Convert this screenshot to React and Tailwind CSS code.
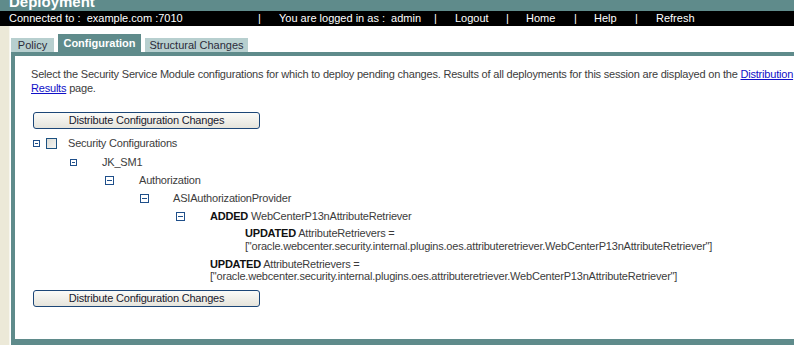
import React from 'react';

const TEAL = 'bg-[#5f8b8b]';

function Minus({ small }) {
  return (
    <span
      className={`inline-flex ${small ? 'w-[7px] h-[7px]' : 'w-[9px] h-[9px]'} border border-[#1f4f8a] items-center justify-center bg-white shrink-0`}
    >
      <span className={`block ${small ? 'w-[3px]' : 'w-[5px]'} h-[1px] bg-[#1f4f8a]`} />
    </span>
  );
}

function Button() {
  return (
    <button className="w-[227px] h-[17px] border border-[#1c4677] rounded-[3px] bg-gradient-to-b from-[#fbfbf8] to-[#e6e4dc] text-[11px] leading-[15px] text-[#1a1a2e] tracking-[-0.2px]">
      Distribute Configuration Changes
    </button>
  );
}

function TreeRow({ iconX, textX, height, small, children }) {
  const w = small ? 7 : 9;
  return (
    <div className="flex items-center" style={{ height }}>
      <div style={{ width: iconX }} className="shrink-0" />
      <Minus small={small} />
      <div style={{ width: textX - iconX - w }} className="shrink-0" />
      <div className="whitespace-nowrap">{children}</div>
    </div>
  );
}

export default function App() {
  const navCell = 'shrink-0 whitespace-pre';
  return (
    <div className="w-[794px] h-[345px] overflow-hidden bg-white text-[11px] text-[#3c3c3c] font-['Liberation_Sans',Arial,sans-serif]">
      {/* title strip */}
      <div className={`h-[11px] ${TEAL} overflow-hidden`}>
        <div className="pl-[9px] -mt-[6px] text-[15px] font-bold text-white leading-[16px]">Deployment</div>
      </div>

      {/* black nav bar */}
      <div className="h-[15px] bg-black text-white flex items-center leading-[15px]">
        <span className={`${navCell} w-[258px] pl-[9px]`}>Connected to :  example.com :7010</span>
        <span className={`${navCell} w-[21px]`}>|</span>
        <span className={`${navCell} w-[155px]`}>You are logged in as :  admin</span>
        <span className={`${navCell} w-[21px]`}>|</span>
        <span className={`${navCell} w-[51px]`}>Logout</span>
        <span className={`${navCell} w-[20px]`}>|</span>
        <span className={`${navCell} w-[48px]`}>Home</span>
        <span className={`${navCell} w-[20px]`}>|</span>
        <span className={`${navCell} w-[41px]`}>Help</span>
        <span className={`${navCell} w-[21px]`}>|</span>
        <span className={navCell}>Refresh</span>
      </div>

      <div className="flex h-[319px]">
        {/* left gutter */}
        <div className="w-[10px] shrink-0 bg-[#ece9d8] border-r border-[#f7f6ef]" />

        <div className="flex-1 flex flex-col pl-[1px] min-w-0">
          {/* tabs */}
          <div className="flex items-end h-[26px] pt-[8px] text-[#2b2b3a]">
            <div className="w-[43px] h-[14px] bg-[#b7cfcf] flex items-center justify-center leading-[14px]">Policy</div>
            <div className="w-[4px]" />
            <div className={`w-[83px] h-[18px] ${TEAL} text-white font-bold flex items-center justify-center leading-[18px]`}>Configuration</div>
            <div className="w-[4px]" />
            <div className="w-[103px] h-[14px] bg-[#b7cfcf] flex items-center justify-center leading-[14px]">Structural Changes</div>
          </div>

          {/* panel */}
          <div className="flex-1 border-l-4 border-t-4 border-b-[6px] border-[#5f8b8b] w-[800px] pl-[16px] pt-[11px] tracking-[-0.2px]">
            <p className="leading-[14px] w-[775px]">
              Select the Security Service Module configurations for which to deploy pending changes. Results of all deployments for this session are displayed on the{' '}
              <a className="text-[#1010c8] underline">Distribution</a>{' '}
              <a className="text-[#1010c8] underline">Results</a> page.
            </p>

            <div className="mt-[17px] ml-[2px]">
              <Button />
            </div>

            <div className="ml-[-16px] mt-[4px] pt-[1px]">
              <div className="flex items-center h-[19px]">
                <div className="w-[18px] shrink-0" />
                <Minus small />
                <div className="w-[6px] shrink-0" />
                <span className="w-[11px] h-[11px] border border-[#1c5180] bg-gradient-to-br from-[#dcdcd6] to-[#f5f5f2] shrink-0" />
                <div className="w-[11px] shrink-0" />
                <span>Security Configurations</span>
              </div>
              <TreeRow small iconX={55} textX={87} height={18}>JK_SM1</TreeRow>
              <TreeRow iconX={90} textX={124} height={18}>Authorization</TreeRow>
              <TreeRow iconX={125} textX={158} height={18}>ASIAuthorizationProvider</TreeRow>
              <TreeRow iconX={161} textX={195} height={18}>
                <b className="text-[#111]">ADDED</b> WebCenterP13nAttributeRetriever
              </TreeRow>
              <div className="pl-[230px] pt-[2px] leading-[13px] whitespace-nowrap">
                <div><b className="text-[#111]">UPDATED</b> AttributeRetrievers =</div>
                <div>["oracle.webcenter.security.internal.plugins.oes.attributeretriever.WebCenterP13nAttributeRetriever"]</div>
              </div>
              <div className="pl-[195px] pt-[5px] leading-[12px] whitespace-nowrap">
                <div><b className="text-[#111]">UPDATED</b> AttributeRetrievers =</div>
                <div>["oracle.webcenter.security.internal.plugins.oes.attributeretriever.WebCenterP13nAttributeRetriever"]</div>
              </div>
            </div>

            <div className="mt-[8px] ml-[2px]">
              <Button />
            </div>
          </div>
        </div>
      </div>
    </div>
  );
}
